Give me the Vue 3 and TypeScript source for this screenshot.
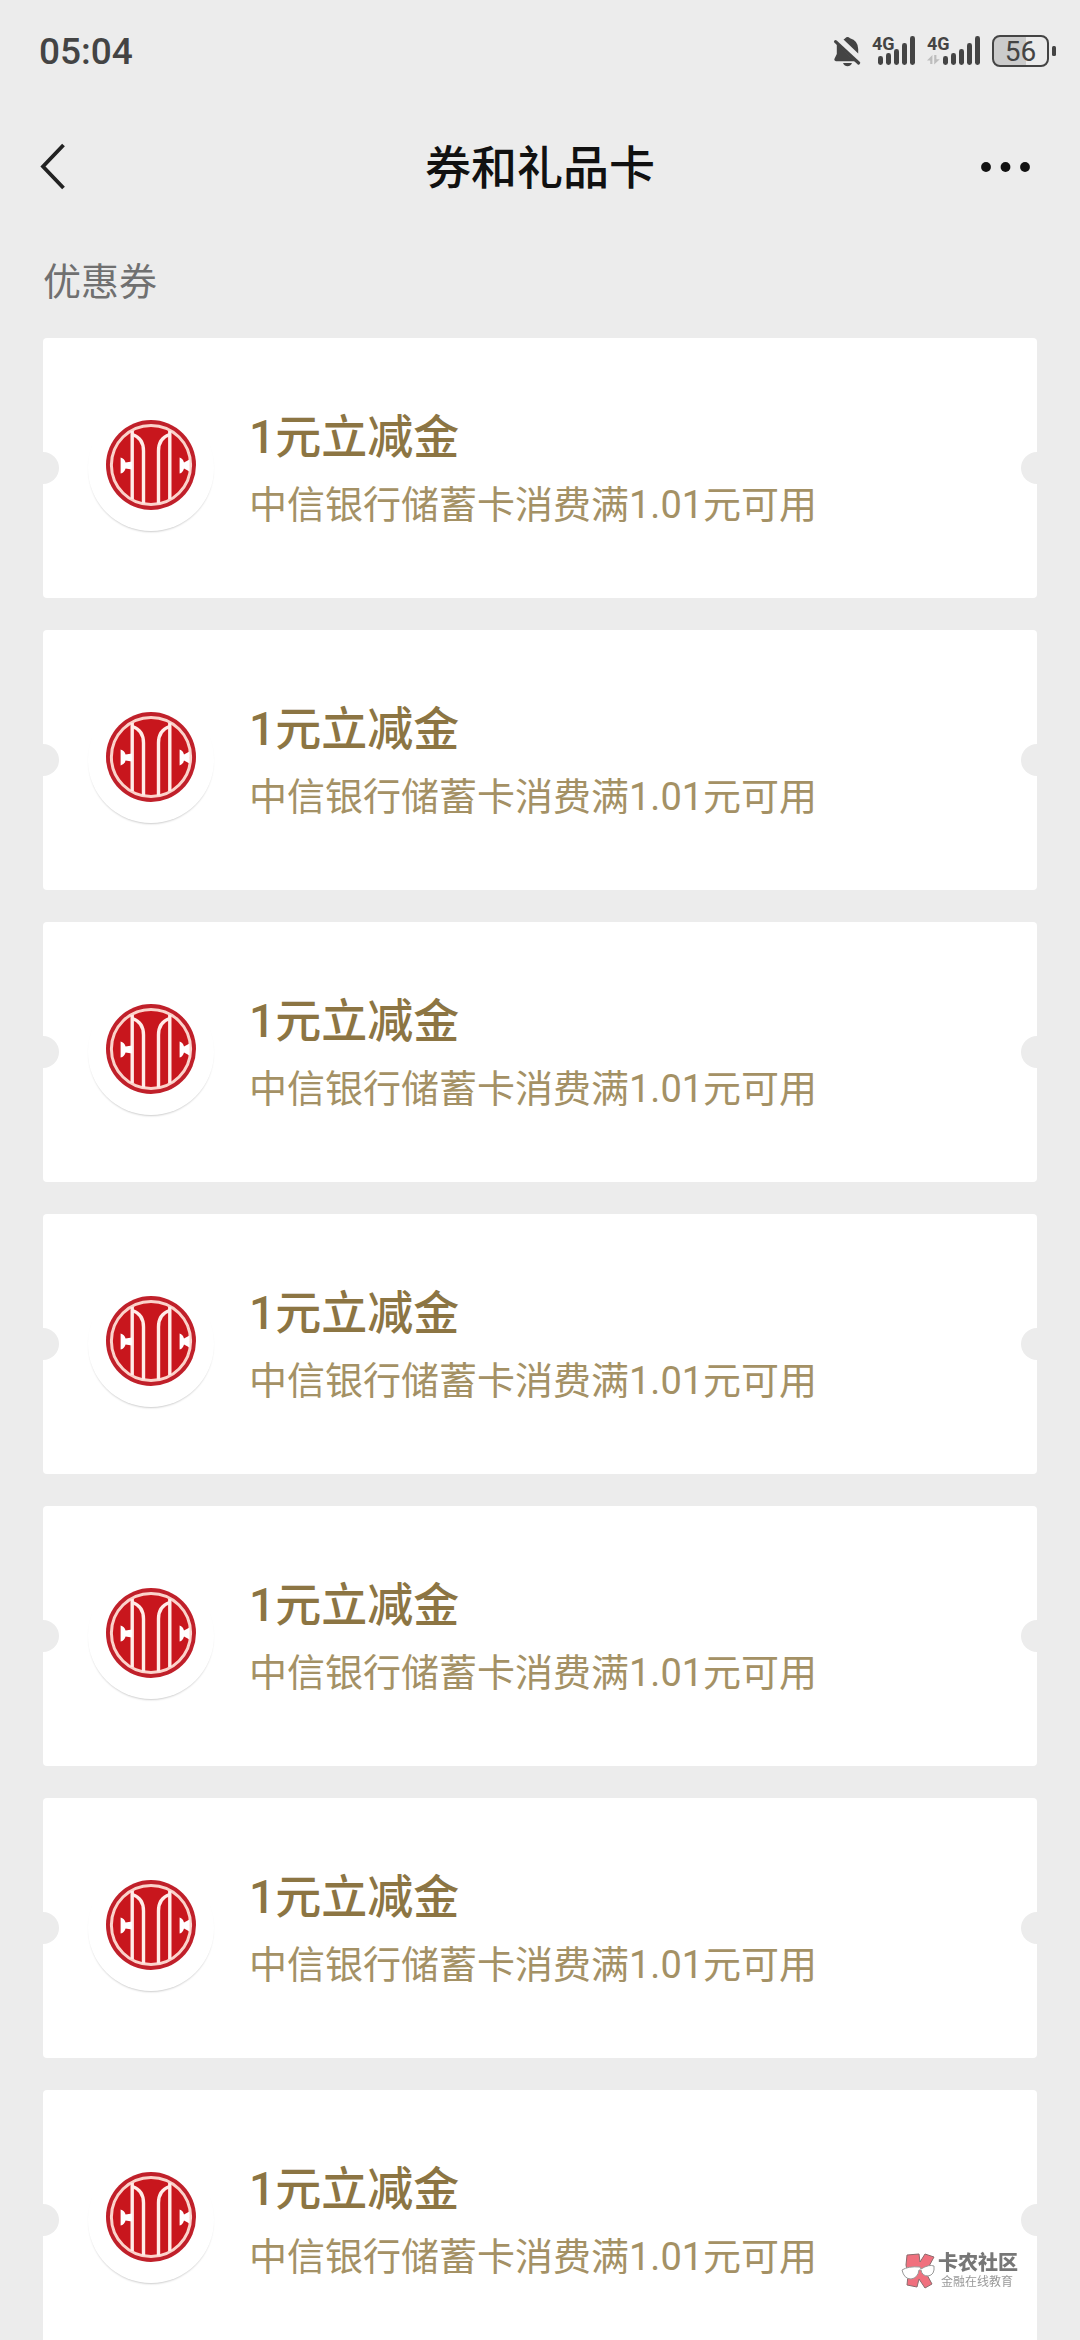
<script setup lang="ts">
interface Coupon {
  id: number
  title: string
  description: string
}

const coupons: Coupon[] = Array.from({ length: 7 }, (_, i) => ({
  id: i + 1,
  title: '1元立减金',
  description: '中信银行储蓄卡消费满1.01元可用',
}))

// x offset and height of each signal bar
const bars = [
  { x: 6, h: 9 },
  { x: 14, h: 12 },
  { x: 22, h: 16 },
  { x: 30, h: 22 },
  { x: 38, h: 29 },
]
</script>

<template>
  <div class="page">
    <div class="status">
      <time class="clock">05:04</time>
      <div class="indicators">
        <svg class="bell" width="28" height="32" viewBox="32 35 28 32" aria-label="静音">
          <path d="M35.8 44 L54 61.2 H35 Q32.6 61 33.6 58.6 L35.8 54 Z" fill="#444" />
          <path d="M42.5 39.6 Q44 38.6 44.2 38.2 Q46.5 35.8 49 38.2 Q57 40.5 57.2 49 V53.6 Z" fill="#444" />
          <path d="M34.6 41.6 L57.6 63" stroke="#444" stroke-width="3.2" stroke-linecap="round" />
          <path d="M42 63 H51 Q49.5 66.2 46.5 66.2 Q43.5 66.2 42 63 Z" fill="#444" />
        </svg>
        <svg class="signal" width="44" height="44" viewBox="0 -6 44 44">
          <text x="0" y="15" class="net">4G</text>
          <rect v-for="b in bars" :key="b.x" :x="b.x" :y="30 - b.h" width="5" :height="b.h" rx="2.4" fill="#444" />
        </svg>
        <svg class="signal" width="54" height="44" viewBox="0 -6 54 44">
          <text x="0" y="15" class="net">4G</text>
          <path d="M0 25.4 L5.4 20 V29 H3.2 V25.4 Z M7.2 20 H9.4 V24.2 H12.8 L7.2 29.6 Z" fill="#bdbdbd" />
          <rect v-for="b in bars" :key="b.x" :x="b.x + 10" :y="30 - b.h" width="5" :height="b.h" rx="2.4" fill="#444" />
        </svg>
        <svg class="battery" width="64" height="32" viewBox="0 0 64 32">
          <path d="M8 1 H34 V31 H8 Q1 31 1 24 V8 Q1 1 8 1 Z" fill="#cbcbcb" />
          <rect x="1" y="1" width="55" height="30" rx="7" fill="none" stroke="#444" stroke-width="2" />
          <rect x="60" y="11" width="4" height="10" rx="1.5" fill="#444" />
          <text x="28.5" y="25.5" text-anchor="middle" class="level">56</text>
        </svg>
      </div>
    </div>

    <header class="nav">
      <button class="icon-button" type="button" aria-label="返回">
        <svg width="26" height="48" viewBox="0 0 26 48">
          <path d="M23.5 2 L3 23.5 L23.5 45" fill="none" stroke="#222" stroke-width="3.8" />
        </svg>
      </button>
      <h1 class="nav-title">券和礼品卡</h1>
      <button class="icon-button end" type="button" aria-label="更多">
        <svg width="50" height="10" viewBox="0 0 50 10">
          <circle cx="6" cy="5" r="4.9" fill="#111" />
          <circle cx="25.5" cy="5" r="4.9" fill="#111" />
          <circle cx="45" cy="5" r="4.9" fill="#111" />
        </svg>
      </button>
    </header>

    <main class="content">
      <h2 class="section-title">优惠券</h2>
      <ul class="coupons">
        <li v-for="coupon in coupons" :key="coupon.id" class="coupon">
          <div class="badge">
            <svg width="90" height="90" viewBox="0 0 90 90" aria-label="中信银行">
              <circle cx="45" cy="45" r="45" fill="#c0202a" />
              <circle cx="45" cy="45" r="39.6" fill="#c8161d" stroke="#fbd3cb" stroke-width="3" />
              <g fill="none" stroke="#ffece8" stroke-width="3.4">
                <path d="M26.2 11 V79" />
                <path d="M63.8 11 V79" />
                <path d="M26.5 14.5 C34 17 37.5 22 37.5 31 V83.5" />
                <path d="M63.5 14.5 C56 17 52.5 22 52.5 31 V83.5" />
              </g>
              <path d="M14.6 37.5 Q18.5 38.5 19.6 42.6 L26 41.6 V49.4 L19.6 48.4 Q18.5 52.5 14.6 53.5 Z" fill="#fff" />
              <path d="M73.6 37.5 Q77 38.5 78 42.6 L83.5 39.6 V51.4 L78 48.4 Q77 52.5 73.6 53.5 Z" fill="#fff" />
            </svg>
          </div>
          <div class="text">
            <h3 class="title">{{ coupon.title }}</h3>
            <p class="desc">{{ coupon.description }}</p>
          </div>
        </li>
      </ul>
    </main>

    <div class="watermark">
      <svg width="34" height="36" viewBox="0 0 34 36">
        <path d="M6 2 L18 1 L19 9 L24 1 L33 4 L27 15 L25 20 L31 31 L24 35 L18 26 L16 34 L6 32 L7 22 L5 12 Z" fill="#f0707e" stroke="#8b6b6d" stroke-width="1" />
        <path d="M1 17 Q7 13 19 14 L20 16 Q28 11 33 13 Q34 22 27 23 Q21 23 20 17 L18 17 Q17 25 10 26 Q3 26 1 17 Z" fill="#fff" stroke="#999" stroke-width="1" />
      </svg>
      <div class="watermark-text">
        <span class="brand">卡农社区</span>
        <span class="slogan">金融在线教育</span>
      </div>
    </div>
  </div>
</template>

<style>
body {
  background: #ececec;
}
</style>

<style scoped>
.page {
  display: flex;
  flex-direction: column;
  height: 100vh;
  background: #ececec;
  font-family: Roboto, "Noto Sans CJK SC", sans-serif;
}

h1,
h2,
h3,
p,
ul {
  margin: 0;
  padding: 0;
}

.status {
  display: flex;
  flex: none;
  align-items: center;
  justify-content: space-between;
  height: 102px;
  padding: 0 24px 0 39px;
}

.clock {
  padding-top: 2px;
  font-size: 37px;
  font-weight: 500;
  line-height: 44px;
  color: #444;
}

.indicators {
  display: flex;
  align-items: center;
  gap: 11px;
}

.net {
  font-size: 18px;
  font-weight: 700;
  fill: #444;
}

.level {
  font-size: 28px;
  fill: #444;
}

.nav {
  display: flex;
  flex: none;
  align-items: center;
  height: 130px;
  padding: 0 50px 0 40px;
}

.icon-button {
  display: flex;
  flex: none;
  align-items: center;
  width: 90px;
  height: 80px;
  padding: 0;
  border: 0;
  background: none;
}

.end {
  justify-content: flex-end;
  width: 80px;
}

.nav-title {
  flex: 1;
  padding-top: 2px;
  font-size: 46px;
  font-weight: 500;
  line-height: 68px;
  text-align: center;
  color: #111;
}

.content {
  flex: 1;
  min-height: 0;
  overflow-y: auto;
  padding: 0 43px;
  scrollbar-width: none;
}

.section-title {
  padding: 28px 0 34px;
  font-size: 38px;
  font-weight: 400;
  line-height: 44px;
  color: #707070;
}

.coupons {
  display: flex;
  flex-direction: column;
  gap: 32px;
  list-style: none;
}

.coupon {
  position: relative;
  display: flex;
  align-items: center;
  gap: 35px;
  height: 260px;
  padding: 0 45px;
  box-sizing: border-box;
  overflow: hidden;
  border-radius: 4px;
  background: #fff;
}

.coupon::before,
.coupon::after {
  content: "";
  position: absolute;
  top: 114px;
  width: 32px;
  height: 32px;
  border-radius: 50%;
  background: #ececec;
}

.coupon::before {
  left: -16px;
}

.coupon::after {
  right: -16px;
}

.badge {
  display: flex;
  flex: none;
  justify-content: center;
  width: 126px;
  height: 126px;
  padding-top: 15px;
  box-sizing: border-box;
  border-radius: 50%;
  box-shadow: 0 2px 2px -1px rgba(0, 0, 0, 0.2);
}

.text {
  padding-top: 6px;
}

.title {
  font-size: 46px;
  font-weight: 500;
  line-height: 68px;
  color: #8c7543;
}

.desc {
  font-size: 38px;
  line-height: 68px;
  color: #a49165;
}

.watermark {
  position: fixed;
  right: 62px;
  bottom: 50px;
  display: flex;
  align-items: center;
  gap: 3px;
}

.watermark-text {
  display: flex;
  flex-direction: column;
}

.brand {
  font-size: 20px;
  font-weight: 900;
  line-height: 22px;
  color: #777;
}

.slogan {
  padding-left: 3px;
  font-size: 12px;
  line-height: 16px;
  color: #999;
}
</style>
